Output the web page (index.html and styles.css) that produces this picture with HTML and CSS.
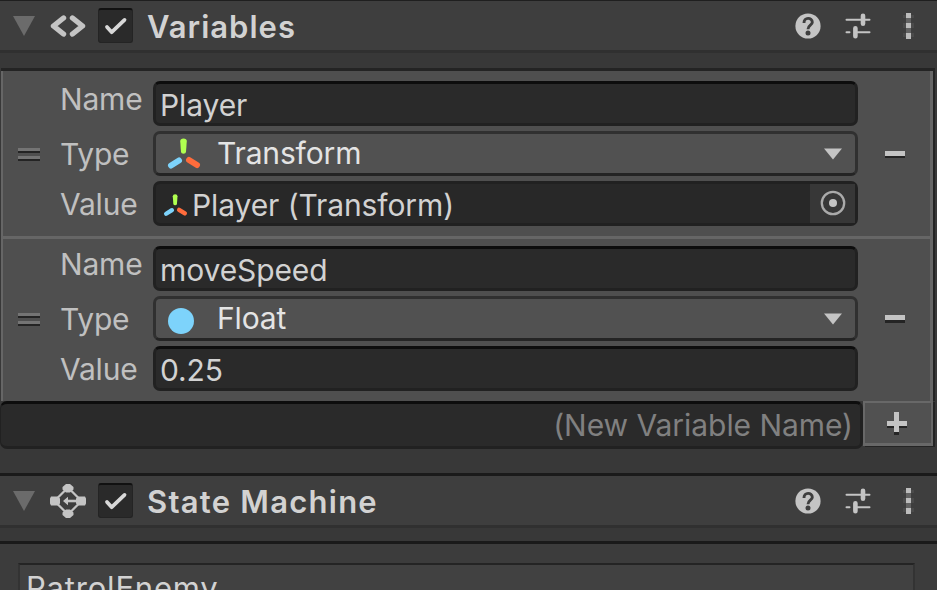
FILE: index.html
```html
<!DOCTYPE html>
<html lang="en">
<head>
<meta charset="utf-8">
<title>Inspector</title>
<link rel="stylesheet" href="styles.css">
</head>
<body>
<svg class="defs" width="0" height="0">
  <symbol id="fold" viewBox="0 0 22 20"><path d="M0 0H22L11 20Z" fill="#6b6b6b"/></symbol>
  <symbol id="check" viewBox="0 0 24 20"><path d="M2.5 10.5L7.5 16L21 3" fill="none" stroke="#d8d8d8" stroke-width="3.9" stroke-linecap="round" stroke-linejoin="round"/></symbol>
  <symbol id="help" viewBox="0 0 26 26"><circle cx="13" cy="13" r="12.6" fill="#c4c4c4"/><path d="M9 10C8.8 3.9 17.3 4.1 17.3 9.2C17.3 12.3 13 12.2 13 16.2" fill="none" stroke="#3e3e3e" stroke-width="2.9"/><circle cx="13" cy="20.1" r="2.5" fill="#3e3e3e"/></symbol>
  <symbol id="preset" viewBox="0 0 26 26"><path d="M1.5 6.7H16M20 6.7H24.5M1.5 19.3H4.5M11 19.3H24.5" stroke="#c4c4c4" stroke-width="2" stroke-linecap="round"/><path d="M18 2.8V10.8M10.4 15.2V23.2" stroke="#c4c4c4" stroke-width="4.6" stroke-linecap="round"/></symbol>
  <symbol id="more" viewBox="0 0 11 26"><path d="M3 0H8V26H3Z" fill="#626262"/><path d="M0 2H11V5H0ZM0 10H11V15H0ZM0 20H11V24H0Z" fill="#4a4a4a"/><path d="M3 0H8V5H3ZM3 10H8V15H3ZM3 20H8V26H3Z" fill="#bcbcbc"/></symbol>
  <symbol id="axes" viewBox="0 0 34 32"><path d="M13.2 3Q13.4 .5 16.5 .5Q19.7 .5 19.8 3L19 14Q18.7 15.8 16.5 15.8Q14.2 15.8 14 14Z" fill="#b0ff50"/><path d="M4 27.5L12 22.5" stroke="#7dd3fb" stroke-width="6" stroke-linecap="round"/><path d="M22 22L30 27" stroke="#ff6c3c" stroke-width="6" stroke-linecap="round"/></symbol>
  <symbol id="arrow" viewBox="0 0 20 12"><path d="M1 .5H19L10 11.5Z" fill="#c4c4c4"/></symbol>
</svg>
<main class="inspector">
  <header class="component">
    <svg class="fold"><use href="#fold"/></svg>
    <svg class="kind" viewBox="0 0 38 36"><path d="M14.500 10L4.500 18L14.500 26M23.500 10L33.500 18L23.500 26" fill="none" stroke="#c4c4c4" stroke-width="5.400" stroke-linecap="round" stroke-linejoin="round"/></svg>
    <span class="toggle"><svg><use href="#check"/></svg></span>
    <h2>Variables</h2>
    <svg class="tool"><use href="#help"/></svg>
    <svg class="tool"><use href="#preset"/></svg>
    <svg class="more"><use href="#more"/></svg>
  </header>
  <section class="list">
    <div class="variable">
      <span class="grip"><i></i><i></i></span>
      <div class="labels"><span class="name">Name</span><span>Type</span><span>Value</span></div>
      <div class="fields">
        <div class="field input">Player</div>
        <div class="field select"><svg class="axes"><use href="#axes"/></svg><span>Transform</span><svg class="arrow"><use href="#arrow"/></svg></div>
        <div class="field object"><svg class="axes small"><use href="#axes"/></svg><span class="reference">Player (Transform)</span><span class="picker"><svg viewBox="0 0 26 26"><circle cx="13" cy="13" r="11.200" fill="none" stroke="#aaa" stroke-width="2.300"/><circle cx="13" cy="13" r="4" fill="#c4c4c4"/></svg></span></div>
      </div>
      <b class="minus"></b>
    </div>
    <div class="variable">
      <span class="grip"><i></i><i></i></span>
      <div class="labels"><span class="name">Name</span><span>Type</span><span>Value</span></div>
      <div class="fields">
        <div class="field input">moveSpeed</div>
        <div class="field select"><b class="dot"></b><span>Float</span><svg class="arrow"><use href="#arrow"/></svg></div>
        <div class="field input">0.25</div>
      </div>
      <b class="minus second"></b>
    </div>
  </section>
  <div class="adder">
    <div class="new"><span>(New Variable Name)</span></div>
    <div class="add"><svg viewBox="0 0 20 24"><path d="M0 13H20V16H0ZM7 20H12V23H7Z" fill="#252525"/><path d="M7 0H12V9H20V14H12V20H7V14H0V9H7Z" fill="#c4c4c4"/></svg></div>
  </div>
  <header class="component machine">
    <svg class="fold"><use href="#fold"/></svg>
    <svg class="kind" viewBox="0 0 38 36"><path d="M19 4.500L5.500 18L19 31.500L32.500 18Z" fill="none" stroke="#c4c4c4" stroke-width="2.200"/><path d="M17 1H21L24.500 4V6.500L21 9.500H17L13.500 6.500V4ZM17 26.500H21L24.500 29.500V32L21 35H17L13.500 32V29.500ZM2 13.500H8.500L11 15.500V20.500L8.500 22.500H2L1 20.500V15.500ZM29.500 13.500H36L37 15.500V20.500L36 22.500H29.500L27 20.500V15.500ZM14 18L19 13.800V22.200Z" fill="#c4c4c4"/><path d="M17 18H31" stroke="#c4c4c4" stroke-width="2.600"/></svg>
    <span class="toggle"><svg><use href="#check"/></svg></span>
    <h2 class="state">State Machine</h2>
    <svg class="tool"><use href="#help"/></svg>
    <svg class="tool"><use href="#preset"/></svg>
    <svg class="more"><use href="#more"/></svg>
  </header>
  <section class="graph"><div class="graph-title"><span>PatrolEnemy</span></div></section>
</main>
</body>
</html>
```
FILE: styles.css
```css
* { box-sizing: border-box; }
body {
  margin: 0;
  height: 590px;
  overflow: hidden;
  background: #383838;
  color: #c0c0c0;
  font: 30px/44px Inter, sans-serif;
}
.defs { position: absolute; }
svg { display: block; flex: none; }
.inspector { width: 937px; height: 590px; overflow: hidden; }
.component {
  display: flex;
  align-items: center;
  height: 53px;
  padding: 0 23px 0 13px;
  border-top: 1px solid #1f1f1f;
  border-bottom: 3px solid #303030;
  background: #3e3e3e;
}
.machine { height: 55px; margin-top: 24px; border-top: 3px solid #1a1a1a; }
.fold { width: 22px; height: 20px; }
.kind { width: 38px; height: 36px; margin-left: 14px; }
.toggle {
  width: 35px;
  height: 35px;
  margin-left: 11px;
  padding: 7px 5px;
  border: 1px solid #242424;
  border-top: 2px solid #111;
  border-radius: 3px;
  background: #2a2a2a;
}
.toggle svg { width: 24px; height: 19px; }
h2 {
  flex: 1;
  margin: 2px 0 0 14px;
  font-size: 31px;
  font-weight: 600;
  line-height: 44px;
  letter-spacing: 1px;
  color: #d2d2d2;
  white-space: nowrap;
}
h2.state { letter-spacing: 1.25px; }
.tool { width: 26px; height: 26px; margin-right: 24px; }
.tool + .more { margin-left: 8px; }
.more { width: 11px; height: 26px; }
.list {
  width: 934px;
  margin: 15px 0 0 1px;
  border-top: 3px solid #242424;
  border-right: 2px solid #242424;
}
.variable {
  display: flex;
  height: 168px;
  padding-top: 10px;
  border: solid #666;
  border-width: 0 3px 3px 2px;
  background: #4f4f4f;
}
.variable + .variable { height: 162px; padding-top: 7px; border-bottom: 0; }
.grip { width: 22px; margin: 67px 0 0 15px; }
.grip i { display: block; height: 5px; margin-bottom: 3px; border-top: 3px solid #747474; border-bottom: 2px solid #242424; }
.labels { display: flex; flex-direction: column; gap: 6px; width: 93px; margin: 1px 0 0 20px; letter-spacing: -.2px; }
.labels span { height: 44px; }
.labels .name { margin: -5px 0 5px; }
.fields { display: grid; grid-template-rows: repeat(3, 45px); gap: 5px; width: 705px; }
.field {
  display: flex;
  align-items: center;
  border: 3px solid #212121;
  border-radius: 7px;
  background: #2a2a2a;
  color: #d2d2d2;
  letter-spacing: -.1px;
  white-space: nowrap;
}
.input { padding: 2px 0 0 4px; border-top-color: #0d0d0d; }
.select { padding: 0 12px 0 11px; border-color: #303030; border-bottom-color: #242424; background: #515151; color: #e4e4e4; }
.axes { width: 34px; height: 32px; }
.select span { flex: 1; margin: -2px 0 0 16px; letter-spacing: -.15px; }
.arrow { width: 20px; height: 12px; }
.object { padding-left: 6px; background: #282828; }
.small { width: 25px; height: 23px; margin: 3px 0 0 1px; }
.object .reference { flex: 1; margin: 3px 0 0 4px; }
.picker { width: 45px; height: 39px; padding: 6px 0 0 10px; background: #373737; }
.picker svg { width: 26px; height: 26px; }
.dot { width: 26px; height: 26px; margin: 5px 4px 0 1px; border-radius: 50%; background: #7dd3fb; }
.select .dot + span { margin-left: 19px; }
.minus { width: 20px; height: 7px; margin: 70px 0 0 27px; border-bottom: 2px solid #242424; background: #c4c4c4; }
.minus.second { height: 8px; margin-top: 69px; border-bottom-width: 3px; }
.adder { display: flex; height: 48px; }
.new {
  width: 863px;
  height: 48px;
  padding: 0 7px;
  border: 3px solid #212121;
  border-top-color: #0d0d0d;
  border-left-width: 1px;
  border-radius: 7px;
  background: #2a2a2a;
  color: #808080;
  line-height: 42px;
  letter-spacing: -.05px;
  text-align: right;
}
.add {
  width: 70px;
  height: 45px;
  padding: 9px 0 0 22px;
  border: 2px solid #686868;
  border-bottom-width: 3px;
  background: #515151;
  box-shadow: 2px 1px #242424;
}
.add svg { width: 20px; height: 24px; }
.graph { height: 60px; margin-top: 13px; padding: 19px 22px 0 18px; border-top: 3px solid #1a1a1a; background: #3c3c3c; }
.graph-title {
  height: 60px;
  padding: 1px 6px;
  border: 2px solid #333;
  border-top-color: #242424;
  background: #414141;
  color: #d2d2d2;
  font-size: 31px;
  letter-spacing: .8px;
}
```
